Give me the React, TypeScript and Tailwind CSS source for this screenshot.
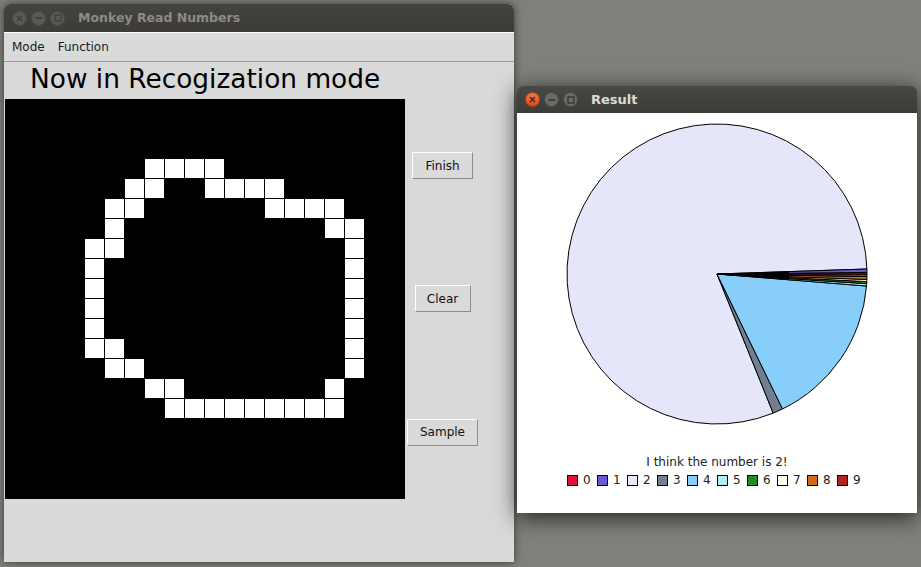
import React from "react";

// white cells of the 20x20 drawing pad, row -> cols
const CELLS: Record<number, number[]> = {
  3: [7, 8, 9, 10],
  4: [6, 7, 10, 11, 12, 13],
  5: [5, 6, 13, 14, 15, 16],
  6: [5, 16, 17],
  7: [4, 5, 17],
  8: [4, 17],
  9: [4, 17],
  10: [4, 17],
  11: [4, 17],
  12: [4, 5, 17],
  13: [5, 6, 17],
  14: [7, 8, 16],
  15: [8, 9, 10, 11, 12, 13, 14, 15, 16],
};

const COLORS = [
  "#dc143c",
  "#6a5acd",
  "#e6e6fa",
  "#708090",
  "#87cefa",
  "#afeeee",
  "#228b22",
  "#fffff0",
  "#d2691e",
  "#b22222",
];

// slices as [digit, startAngle, endAngle], degrees anticlockwise from 3 o'clock
const SLICES: [number, number, number][] = [
  [2, 1.9, 292],
  [3, -68, -64.1],
  [4, -64.1, -4.6],
  [5, -4.6, -3.7],
  [6, -3.7, -2.9],
  [7, -2.9, -2.1],
  [8, -2.1, -1.0],
  [9, -1.0, 0.0],
  [0, 0.0, 0.6],
  [1, 0.6, 1.9],
];

const CX = 200;
const CY = 161;
const R = 150;

const pt = (a: number, r = R) => [
  CX + r * Math.cos((a * Math.PI) / 180),
  CY - r * Math.sin((a * Math.PI) / 180),
];

const slicePath = (a1: number, a2: number) => {
  const [x1, y1] = pt(a1);
  const [x2, y2] = pt(a2);
  const large = a2 - a1 > 180 ? 1 : 0;
  return `M${CX},${CY} L${x1},${y1} A${R},${R} 0 ${large} 0 ${x2},${y2} Z`;
};

// the thin slices' outlines merge into a black wedge near the centre
const hub = (() => {
  const [x1, y1] = pt(-4.6, 72);
  const [x2, y2] = pt(1.9, 72);
  return `M${CX},${CY} L${x1},${y1} L${x2},${y2} Z`;
})();

function WinButtons({ active }: { active: boolean }) {
  const base =
    "w-[15px] h-[15px] rounded-full flex items-center justify-center border";
  const gray = active
    ? "bg-[#6c6b66] border-[#4a4945]"
    : "bg-[#5a5955] border-[#4a4945]";
  const ink = active ? "#2f2e2b" : "#3e3d39";
  return (
    <div className="flex items-center gap-[4px]">
      <div
        className={`${base} ${
          active
            ? "bg-gradient-to-b from-[#f3784a] to-[#dd4814] border-[#b83d12]"
            : gray
        }`}
      >
        <svg width="7" height="7" viewBox="0 0 7 7">
          <path d="M1 1L6 6M6 1L1 6" stroke={ink} strokeWidth="1.3" />
        </svg>
      </div>
      <div className={`${base} ${gray}`}>
        <svg width="8" height="8" viewBox="0 0 8 8">
          <path d="M0.5 4H7.5" stroke={ink} strokeWidth="1.5" />
        </svg>
      </div>
      <div className={`${base} ${gray}`}>
        <svg width="8" height="8" viewBox="0 0 8 8">
          <rect x="1" y="1" width="6" height="6" fill="none" stroke={ink} strokeWidth="1.2" />
        </svg>
      </div>
    </div>
  );
}

function SwingButton({ label, w }: { label: string; w: string }) {
  return (
    <button
      className={`${w} h-[27px] bg-[#dadada] border border-t-white border-l-white border-r-[#8c8c8c] border-b-[#8c8c8c] text-[12px] text-[#111]`}
    >
      {label}
    </button>
  );
}

function Pad() {
  const cells = [];
  for (let r = 0; r < 20; r++) {
    for (let c = 0; c < 20; c++) {
      const on = CELLS[r]?.includes(c);
      cells.push(
        <div key={`${r}-${c}`} className="w-[20px] h-[20px]">
          {on && <div className="w-[19px] h-[19px] bg-white" />}
        </div>
      );
    }
  }
  return (
    <div className="w-[400px] h-[400px] bg-black grid grid-cols-[repeat(20,20px)]">
      {cells}
    </div>
  );
}

export default function App() {
  return (
    <div className="relative w-[921px] h-[567px] overflow-hidden bg-[#7f807b] font-['DejaVu_Sans',sans-serif]">
      {/* main window */}
      <div className="absolute left-[4px] top-[4px] w-[510px] h-[558px] flex flex-col rounded-t-[6px] overflow-hidden bg-[#d9d9d9] shadow-[0_0_8px_rgba(0,0,0,0.55)]">
        <div className="h-[28px] flex items-center pl-[8px] bg-gradient-to-b from-[#45433f] to-[#3d3c38]">
          <WinButtons active={false} />
          <span className="ml-[13px] text-[12.5px] font-bold text-[#8d8b84]">
            Monkey Read Numbers
          </span>
        </div>
        <div className="h-[30px] flex items-center gap-[13px] pl-[8px] border-t border-t-white border-b border-b-[#9a9a9a] bg-[#dadada] text-[12px] text-[#1a1a1a]">
          <span>Mode</span>
          <span>Function</span>
        </div>
        <div className="h-[37px] pl-[26px] pt-[2px] text-[26.4px] leading-[30px] text-black">
          Now in Recogization mode
        </div>
        <div className="flex pl-[1px]">
          <Pad />
          <div className="w-[75px] h-[400px] flex flex-col">
            <div className="flex-1 flex items-center justify-center">
              <SwingButton label="Finish" w="w-[61px]" />
            </div>
            <div className="flex-1 flex items-center justify-center">
              <SwingButton label="Clear" w="w-[56px]" />
            </div>
            <div className="flex-1 flex items-center justify-center">
              <SwingButton label="Sample" w="w-[71px]" />
            </div>
          </div>
        </div>
      </div>

      {/* result window */}
      <div className="absolute left-[517px] top-[86px] w-[400px] flex flex-col rounded-t-[6px] overflow-hidden shadow-[0_4px_22px_rgba(0,0,0,0.75)]">
        <div className="h-[27px] flex items-center pl-[8px] bg-gradient-to-b from-[#4a4844] to-[#3c3b37]">
          <WinButtons active />
          <span className="ml-[13px] text-[13px] font-bold text-[#dfdbd2]">
            Result
          </span>
        </div>
        <div className="h-[400px] bg-white flex flex-col items-center">
          <svg width="400" height="330" viewBox="0 0 400 330">
            {SLICES.map(([d, a1, a2]) => (
              <path
                key={d}
                d={slicePath(a1, a2)}
                fill={COLORS[d]}
                stroke="#000"
                strokeWidth="1"
                strokeLinejoin="miter"
              />
            ))}
            <path d={hub} fill="#000" />
          </svg>
          <div className="mt-[12px] h-[15px] leading-[15px] text-[12px] text-[#222]">
            I think the number is 2!
          </div>
          <div className="mt-[3px] flex text-[12px] leading-[14px] text-[#222]">
            {COLORS.map((c, i) => (
              <div key={i} className="w-[30px] flex items-center">
                <div
                  className="w-[11px] h-[11px] border border-black"
                  style={{ backgroundColor: c }}
                />
                <span className="ml-[5px]">{i}</span>
              </div>
            ))}
          </div>
        </div>
      </div>
    </div>
  );
}
